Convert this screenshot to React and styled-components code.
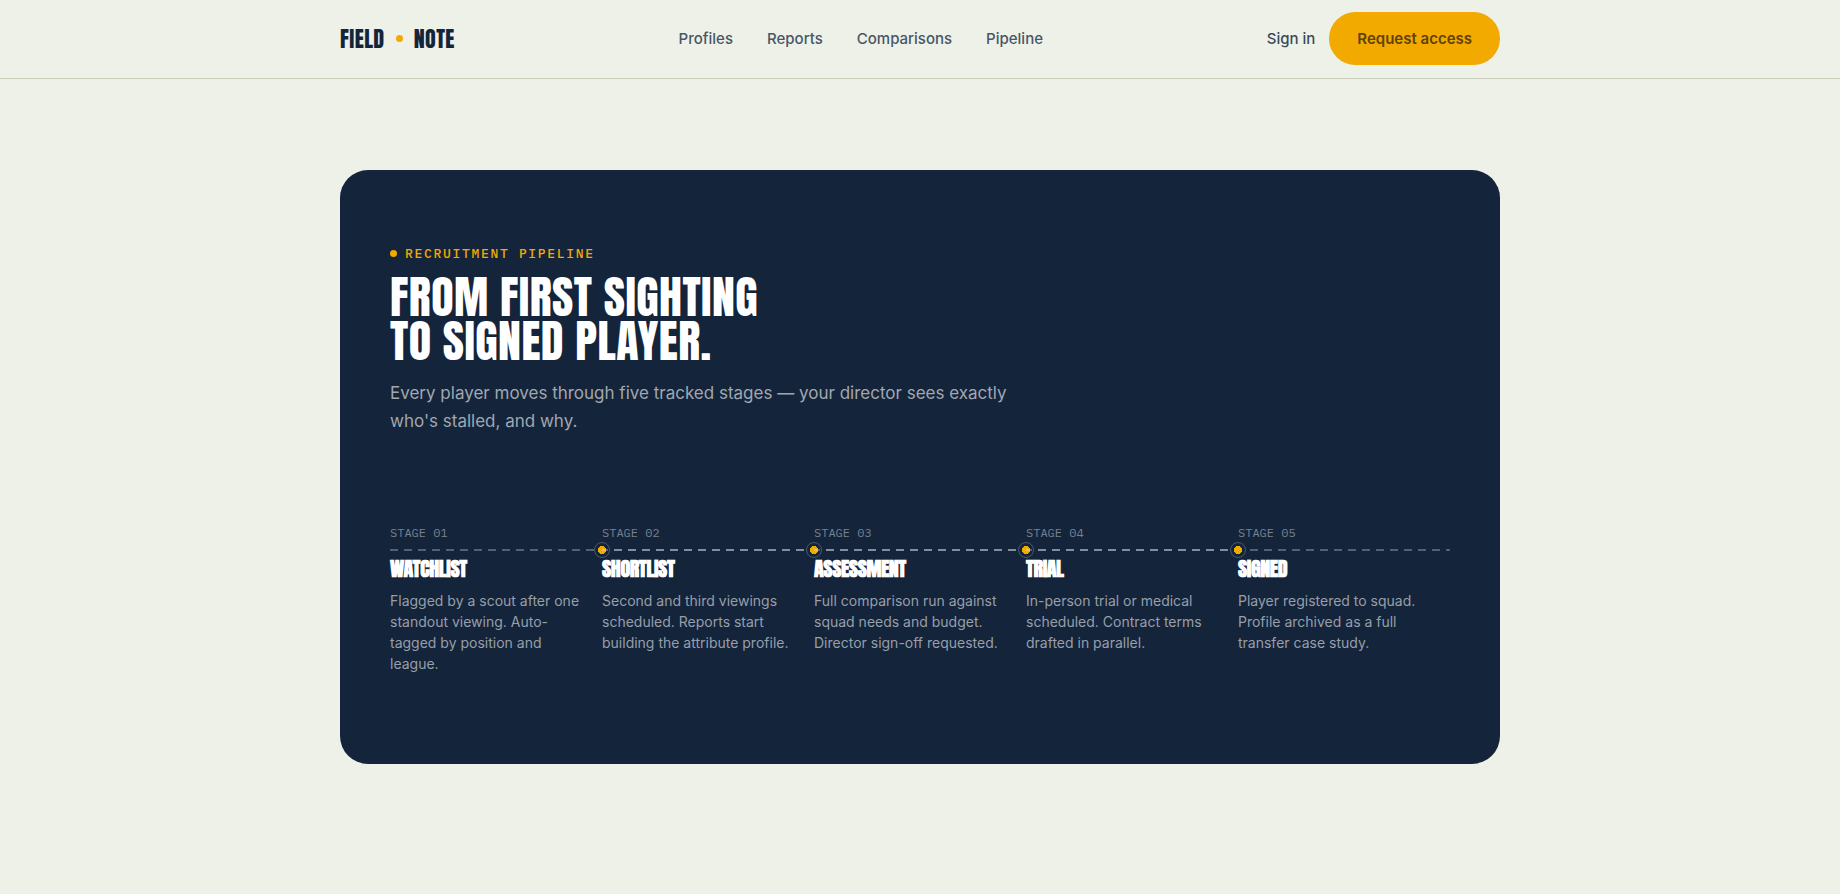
import React from "react";
import styled, { createGlobalStyle } from "styled-components";

const navLinks = ["Profiles", "Reports", "Comparisons", "Pipeline"];

const stages = [
  {
    label: "STAGE 01",
    title: "WATCHLIST",
    text: "Flagged by a scout after one standout viewing. Auto-tagged by position and league.",
  },
  {
    label: "STAGE 02",
    title: "SHORTLIST",
    text: "Second and third viewings scheduled. Reports start building the attribute profile.",
  },
  {
    label: "STAGE 03",
    title: "ASSESSMENT",
    text: "Full comparison run against squad needs and budget. Director sign-off requested.",
  },
  {
    label: "STAGE 04",
    title: "TRIAL",
    text: "In-person trial or medical scheduled. Contract terms drafted in parallel.",
  },
  {
    label: "STAGE 05",
    title: "SIGNED",
    text: "Player registered to squad. Profile archived as a full transfer case study.",
  },
];

const App = () => {
  return (
    <>
      <GlobalStyle />
      <Header>
        <HeaderInner>
          <Logo href="#">
            FIELD
            <Dot />
            NOTE
          </Logo>
          <Nav>
            {navLinks.map((link) => (
              <NavLink key={link} href={`#${link.toLowerCase()}`}>
                {link}
              </NavLink>
            ))}
          </Nav>
          <Actions>
            <NavLink href="#signin" $strong>
              Sign in
            </NavLink>
            <RequestButton type="button">Request access</RequestButton>
          </Actions>
        </HeaderInner>
      </Header>
      <Main>
        <Card>
          <Eyebrow>
            <Dot />
            RECRUITMENT PIPELINE
          </Eyebrow>
          <Title>
            FROM FIRST SIGHTING
            <br />
            TO SIGNED PLAYER.
          </Title>
          <Lead>
            Every player moves through five tracked stages — your director sees
            exactly who's stalled, and why.
          </Lead>
          <Stages>
            {stages.map((stage, i) => (
              <Stage key={stage.label}>
                <StageLabel>{stage.label}</StageLabel>
                <Track $first={i === 0} $bright={i > 0 && i < stages.length - 1}>
                  {i > 0 && <Marker />}
                </Track>
                <StageTitle>{stage.title}</StageTitle>
                <StageText>{stage.text}</StageText>
              </Stage>
            ))}
          </Stages>
        </Card>
      </Main>
    </>
  );
};

export default App;

const display = `Anton, "Liberation Sans Narrow", sans-serif`;
const mono = `"IBM Plex Mono", "Liberation Mono", monospace`;

const GlobalStyle = createGlobalStyle`
  * {
    box-sizing: border-box;
    margin: 0;
    padding: 0;
  }
  body {
    background: #edf1e7;
    color: #14243b;
    font-family: Inter, "Liberation Sans", sans-serif;
  }
`;

const Header = styled.header`
  border-bottom: 1px solid #c9cebb;
`;

const HeaderInner = styled.div`
  max-width: 1160px;
  margin: 0 auto;
  padding: 12px 0 13px;
  display: flex;
  align-items: center;
  justify-content: space-between;
`;

const Dot = styled.span`
  width: 7px;
  height: 7px;
  border-radius: 50%;
  background: #f2a900;
`;

const Logo = styled.a`
  display: flex;
  align-items: center;
  gap: 11px;
  font-family: ${display};
  font-weight: 400;
  font-size: 22px;
  letter-spacing: 0.02em;
  color: #14243b;
  text-decoration: none;
`;

const Nav = styled.nav`
  display: flex;
  gap: 34px;
`;

const NavLink = styled.a`
  font-size: 15px;
  font-weight: 500;
  color: ${(props) => (props.$strong ? "#3b495c" : "#485668")};
  text-decoration: none;
`;

const Actions = styled.div`
  display: flex;
  align-items: center;
  gap: 14px;
`;

const RequestButton = styled.button`
  height: 53px;
  padding: 0 28px;
  border: 0;
  border-radius: 999px;
  background: #f2a900;
  color: #5f4208;
  font: 600 15px Inter, sans-serif;
  cursor: pointer;
`;

const Main = styled.main`
  max-width: 1160px;
  margin: 0 auto;
  padding: 91px 0;
`;

const Card = styled.section`
  padding: 74px 50px 90px;
  border-radius: 28px;
  background: #14243b;
`;

const Eyebrow = styled.p`
  display: flex;
  align-items: center;
  gap: 8px;
  font-family: ${mono};
  font-size: 13px;
  line-height: 19px;
  letter-spacing: 0.13em;
  font-weight: 500;
  color: #f2a900;
`;

const Title = styled.h1`
  margin-top: 12px;
  font-family: ${display};
  font-weight: 400;
  font-size: 46px;
  line-height: 44px;
  letter-spacing: 0.01em;
  color: #ffffff;
`;

const Lead = styled.p`
  max-width: 620px;
  margin-top: 16px;
  font-size: 17px;
  line-height: 28px;
  color: #a1a7af;
`;

const Stages = styled.ol`
  margin-top: 90px;
  display: grid;
  grid-template-columns: repeat(5, 1fr);
  list-style: none;
`;

const Stage = styled.li`
  min-width: 0;
`;

const StageLabel = styled.p`
  font-family: ${mono};
  font-size: 12px;
  line-height: 16px;
  color: #78818d;
`;

const Track = styled.div`
  position: relative;
  height: 2px;
  margin: 8px 0;

  &::before,
  &::after {
    content: "";
    position: absolute;
    inset: 0;
    background: repeating-linear-gradient(
      to right,
      rgba(255, 255, 255, 0.28) 0 8px,
      transparent 8px 14px
    );
    background-position-x: ${(props) => (props.$first ? "0" : "-2px")};
  }

  /* second pass runs over the marker and brightens the middle stages */
  &::after {
    display: ${(props) => (props.$bright ? "block" : "none")};
  }
`;

const Marker = styled.span`
  position: absolute;
  left: -8px;
  top: -7px;
  width: 16px;
  height: 16px;
  border: 1px solid #4a5769;
  border-radius: 50%;
  background: radial-gradient(circle, #f2a900 0 4px, #14243b 4px);
`;

const StageTitle = styled.h2`
  font-family: ${display};
  font-weight: 700;
  font-size: 20px;
  line-height: 20px;
  letter-spacing: -0.02em;
  color: #ffffff;
`;

const StageText = styled.p`
  margin-top: 11px;
  padding-right: 20px;
  font-size: 14px;
  line-height: 21px;
  color: #979fa9;
`;
